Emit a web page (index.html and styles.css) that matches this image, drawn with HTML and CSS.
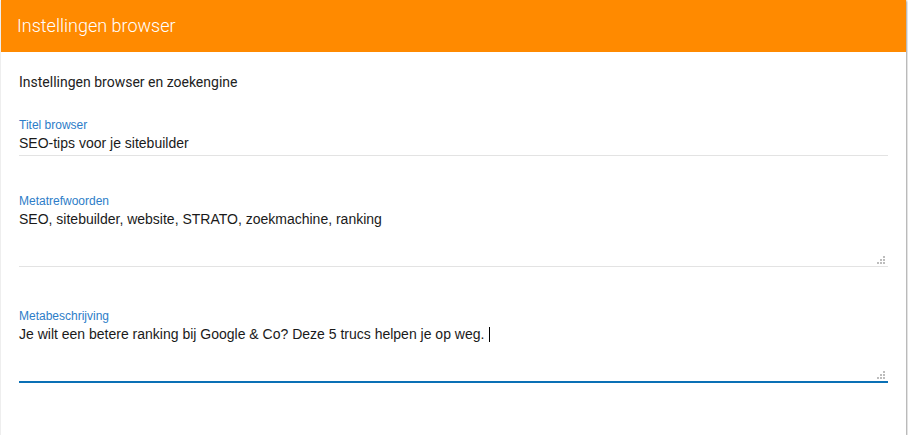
FILE: index.html
```html
<!DOCTYPE html>
<html lang="nl">
<head>
  <meta charset="UTF-8">
  <title>Instellingen browser</title>
  <link rel="stylesheet" href="styles.css">
</head>
<body>
  <div class="card">
    <header class="card-head">
      <h1>Instellingen browser</h1>
    </header>

    <div class="card-body">
      <p class="intro">Instellingen browser en zoekengine</p>

      <div class="field">
        <label>Titel browser</label>
        <div class="input">SEO-tips voor je sitebuilder</div>
      </div>

      <div class="field area">
        <label>Metatrefwoorden</label>
        <div class="input multi">SEO, sitebuilder, website, STRATO, zoekmachine, ranking
          <svg class="grip" width="9" height="9" viewBox="0 0 9 9">
            <rect x="6" y="0" width="2" height="2"/>
            <rect x="3" y="3" width="2" height="2"/>
            <rect x="6" y="3" width="2" height="2"/>
            <rect x="0" y="6" width="2" height="2"/>
            <rect x="3" y="6" width="2" height="2"/>
            <rect x="6" y="6" width="2" height="2"/>
          </svg>
        </div>
      </div>

      <div class="field area focus">
        <label>Metabeschrijving</label>
        <div class="input multi">Je wilt een betere ranking bij Google &amp; Co? Deze 5 trucs helpen je op weg.<span class="caret"></span>
          <svg class="grip" width="9" height="9" viewBox="0 0 9 9">
            <rect x="6" y="0" width="2" height="2"/>
            <rect x="3" y="3" width="2" height="2"/>
            <rect x="6" y="3" width="2" height="2"/>
            <rect x="0" y="6" width="2" height="2"/>
            <rect x="3" y="6" width="2" height="2"/>
            <rect x="6" y="6" width="2" height="2"/>
          </svg>
        </div>
      </div>
    </div>
  </div>
</body>
</html>
```

FILE: styles.css
```css
body {
    margin: 0;
    background: #fff;
}

/******************* kaart *******************/

.card {
    width: 905px;
    margin-left: 1px;
    background: #fff;
    box-shadow: 0 0 1px rgba(0, 0, 0, 0.25), 1px 1px 2px rgba(0, 0, 0, 0.35);
}

.card-head {
    height: 52px;
    background-color: #ff8a00;
    padding-left: 16px;
}

.card-head h1 {
    margin: 0;
    font: 300 18px/52px Roboto, "Liberation Sans", sans-serif;
    color: #fff;
}

.card-body {
    padding: 20px 18px 52px 18px;
}

.intro {
    margin: 0 0 26px 0;
    font: 14px/20px Roboto, "Liberation Sans", sans-serif;
    color: #222;
}

/******************* velden *******************/

.field + .field {
    margin-top: 38px;
}

/* tussen twee textarea's iets meer ruimte */
.field.area + .field.area {
    margin-top: 42px;
}

.field label {
    display: block;
    font: 12px/14px "Liberation Sans", Arial, sans-serif;
    color: #2d7dc8;
    margin-bottom: 2px;
}

.field .input {
    font: 14px/18px "Liberation Sans", Arial, sans-serif;
    color: #1a1a1a;
    padding-bottom: 3px;
    border-bottom: 1px solid #e3e3e3;
}

/* textarea: hoger veld met greep rechtsonder */
.field .input.multi {
    position: relative;
    padding-bottom: 38px;
}

.field.focus .input {
    border-bottom: 2px solid #0a70b5;
}

.grip {
    position: absolute;
    right: 2px;
    bottom: 1px;
    fill: #bdbdbd;
}

.caret {
    display: inline-block;
    width: 1px;
    height: 15px;
    margin-left: 5px;
    vertical-align: -3px;
    background: #000;
}
```
